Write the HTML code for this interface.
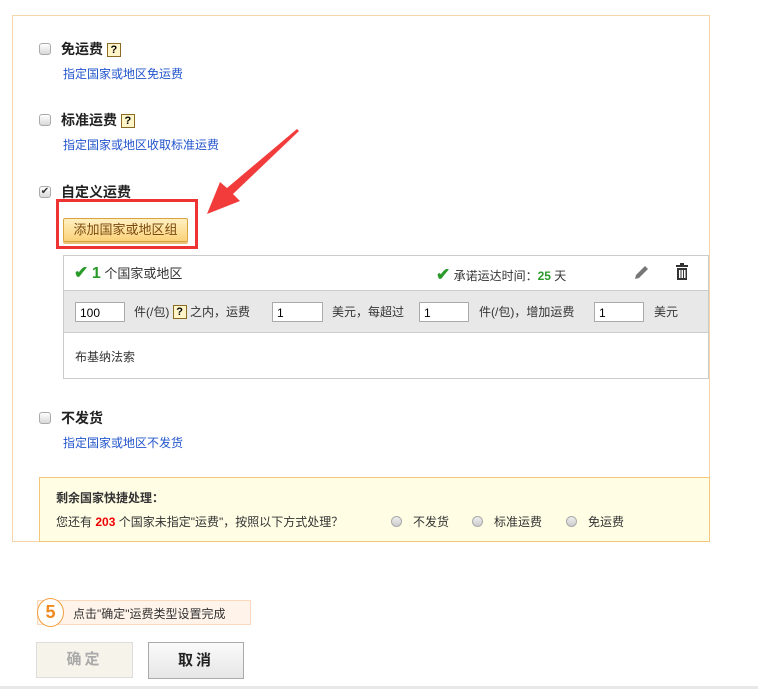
<!DOCTYPE html>
<html><head><meta charset="utf-8"><style>
*{margin:0;padding:0;box-sizing:border-box}
body{width:758px;height:689px;background:#fff;position:relative;overflow:hidden;font-family:"Liberation Sans","Noto Sans CJK SC",sans-serif;font-size:12px;color:#333}
.a{position:absolute;white-space:nowrap}
.cb{position:absolute;width:12px;height:12px;border:1px solid #aaa;border-radius:3px;background:linear-gradient(#fff,#d8d8d8)}
.t{font-size:14px;font-weight:bold;color:#222}
.lk{color:#2255cc;font-size:12px}
.q{display:inline-block;width:14px;height:14px;border:1px solid #8a6a20;background:#fff5c8;font-size:11px;font-weight:bold;line-height:12px;text-align:center;color:#000;vertical-align:1px}
.in{position:absolute;height:20px;border:1px solid #aaa;background:#fff;font-size:12px;padding:3px 0 0 4px;color:#000}
.rd{position:absolute;width:11px;height:11px;border-radius:50%;border:1px solid #aaa;background:linear-gradient(#eee,#ccc)}
.ck{color:#2a9a2a;font-size:17px;font-weight:bold}
</style></head><body>
<div class="a" style="left:12px;top:15px;width:698px;height:527px;border:1px solid #f5d6ab"></div>

<div class="cb" style="left:39px;top:43px"></div>
<div class="a t" style="left:61px;top:39px">免运费 <span class="q">?</span></div>
<div class="a lk" style="left:63px;top:65px">指定国家或地区免运费</div>

<div class="cb" style="left:39px;top:114px"></div>
<div class="a t" style="left:61px;top:110px">标准运费 <span class="q">?</span></div>
<div class="a lk" style="left:63px;top:136px">指定国家或地区收取标准运费</div>

<div class="cb" style="left:39px;top:186px;text-align:center;font-size:10px;line-height:10px;color:#333">✔</div>
<div class="a t" style="left:61px;top:182px">自定义运费</div>

<div class="a" style="left:56px;top:199px;width:142px;height:50px;border:3px solid #ee3333"></div>
<div class="a" style="left:63px;top:218px;width:125px;height:24px;border:1px solid #d9a440;border-radius:2px;background:linear-gradient(#fff0c0,#fbd27a);color:#7a4a10;font-size:13px;text-align:center;line-height:22px;box-shadow:0 2px 0 #e8c47a">添加国家或地区组</div>

<svg class="a" style="left:200px;top:125px" width="105" height="95"><polygon points="99,6 33,69 40,76 7,89 20,57 27,63 97,4" fill="#f23c3c"/></svg>

<div class="a" style="left:63px;top:255px;width:646px;height:124px;border:1px solid #ccc"></div>
<div class="a" style="left:64px;top:290px;width:644px;height:43px;background:#e8e8e8;border-top:1px solid #ccc;border-bottom:1px solid #ccc"></div>
<div class="a" style="left:74px;top:263px;font-size:13px"><span class="ck">✔</span> <b style="color:#2a9a2a;font-size:16px">1</b> 个国家或地区</div>
<div class="a" style="left:436px;top:265px;font-size:12px"><span class="ck">✔</span> 承诺运达时间：<b style="color:#2a9a2a">25</b> 天</div>
<svg class="a" style="left:632px;top:263px" width="18" height="18"><path d="M3,16 L4,12 L13,3 L16,6 L7,15 Z" fill="#777"/></svg>
<svg class="a" style="left:674px;top:263px" width="16" height="18"><rect x="2" y="2" width="12" height="2" fill="#333"/><rect x="6" y="0" width="4" height="2" fill="#333"/><rect x="3" y="5" width="10" height="12" fill="#333"/><rect x="5" y="7" width="1.5" height="8" fill="#fff"/><rect x="7.5" y="7" width="1.5" height="8" fill="#fff"/><rect x="10" y="7" width="1.5" height="8" fill="#fff"/></svg>

<div class="in" style="left:75px;top:302px;width:50px">100</div>
<div class="a" style="left:134px;top:303px">件(/包) <span class="q">?</span> 之内，运费</div>
<div class="in" style="left:272px;top:302px;width:51px">1</div>
<div class="a" style="left:332px;top:303px">美元，每超过</div>
<div class="in" style="left:419px;top:302px;width:50px">1</div>
<div class="a" style="left:479px;top:303px">件(/包)，增加运费</div>
<div class="in" style="left:594px;top:302px;width:50px">1</div>
<div class="a" style="left:654px;top:303px">美元</div>
<div class="a" style="left:75px;top:348px">布基纳法索</div>

<div class="cb" style="left:39px;top:412px"></div>
<div class="a t" style="left:61px;top:408px">不发货</div>
<div class="a lk" style="left:63px;top:434px">指定国家或地区不发货</div>

<div class="a" style="left:39px;top:477px;width:671px;height:65px;background:#fffde4;border:1px solid #f5c77a"></div>
<div class="a" style="left:56px;top:489px;font-weight:bold;color:#333">剩余国家快捷处理：</div>
<div class="a" style="left:56px;top:513px">您还有 <b style="color:#e00">203</b> 个国家未指定"运费"，按照以下方式处理？</div>
<div class="rd" style="left:391px;top:516px"></div><div class="a" style="left:413px;top:513px">不发货</div>
<div class="rd" style="left:472px;top:516px"></div><div class="a" style="left:494px;top:513px">标准运费</div>
<div class="rd" style="left:566px;top:516px"></div><div class="a" style="left:588px;top:513px">免运费</div>

<div class="a" style="left:37px;top:600px;width:214px;height:25px;background:#fff3ea;border:1px solid #fbd9c0"></div>
<div class="a" style="left:37px;top:598px;width:27px;height:29px;border:1.5px solid #f5a040;border-radius:50%;background:#fff;color:#f08a20;font-size:18px;font-weight:bold;text-align:center;line-height:26px">5</div>
<div class="a" style="left:73px;top:605px">点击"确定"运费类型设置完成</div>

<div class="a" style="left:36px;top:642px;width:97px;height:36px;border:1px solid #ddd;background:#f5f3ea;color:#aaa;font-size:15px;font-weight:bold;text-align:center;line-height:34px;letter-spacing:3px">确定</div>
<div class="a" style="left:148px;top:642px;width:96px;height:37px;border:1px solid #aaa;background:linear-gradient(#fafafa,#e6e6e6);color:#222;font-size:15px;font-weight:bold;text-align:center;line-height:35px;letter-spacing:3px">取消</div>
<div class="a" style="left:0;top:686px;width:758px;height:3px;background:#e8e8e8"></div>
</body></html>
